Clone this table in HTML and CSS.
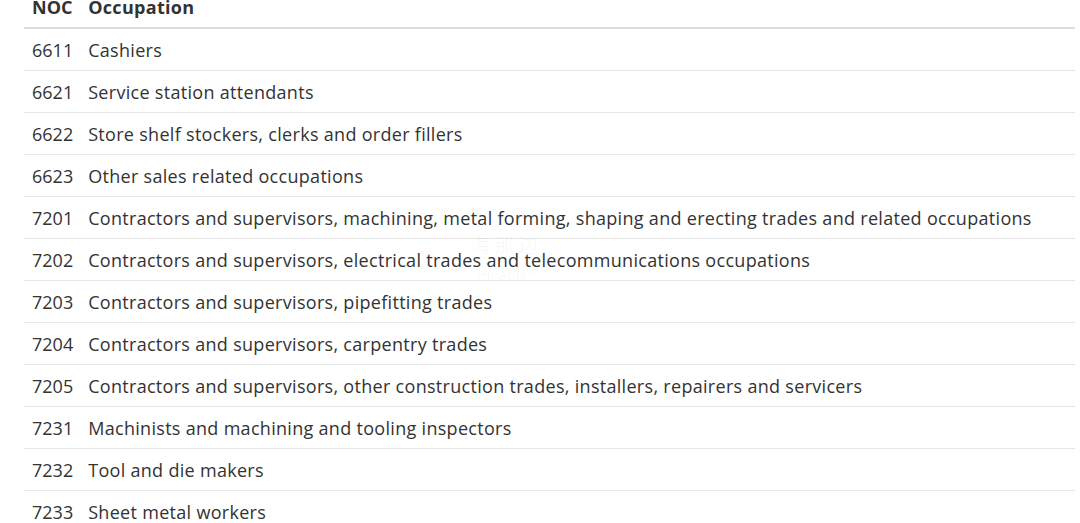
FILE: index.html
```html
<!DOCTYPE html>
<html>
<head>
<meta charset="utf-8">
<link rel="stylesheet" href="styles.css">
</head>
<body>
<div class="wrap">
<table class="noc">
<thead>
<tr><th class="code">NOC</th><th>Occupation</th></tr>
</thead>
<tbody>
<tr><td class="code">6611</td><td>Cashiers</td></tr>
<tr><td class="code">6621</td><td>Service station attendants</td></tr>
<tr><td class="code">6622</td><td>Store shelf stockers, clerks and order fillers</td></tr>
<tr><td class="code">6623</td><td>Other sales related occupations</td></tr>
<tr><td class="code">7201</td><td>Contractors and supervisors, machining, metal forming, shaping and erecting trades and related occupations</td></tr>
<tr><td class="code">7202</td><td>Contractors and supervisors, electrical trades and telecommunications occupations</td></tr>
<tr><td class="code">7203</td><td>Contractors and supervisors, pipefitting trades</td></tr>
<tr><td class="code">7204</td><td>Contractors and supervisors, carpentry trades</td></tr>
<tr><td class="code">7205</td><td>Contractors and supervisors, other construction trades, installers, repairers and servicers</td></tr>
<tr><td class="code">7231</td><td>Machinists and machining and tooling inspectors</td></tr>
<tr><td class="code">7232</td><td>Tool and die makers</td></tr>
<tr><td class="code">7233</td><td>Sheet metal workers</td></tr>
</tbody>
</table>
<div class="watermark"><span class="wm-cn">海那边</span><span class="wm-en">Hinabian</span></div>
</div>
</body>
</html>
```

FILE: styles.css
```css
html, body {
  margin: 0;
  padding: 0;
  background: #fff;
}
.wrap {
  position: relative;
  padding: 0 5px 0 24px;
  overflow: hidden;
  height: 523px;
}
.noc {
  width: 100%;
  border-collapse: collapse;
  margin-top: -14px;
  font-family: "Open Sans", "Noto Sans", sans-serif;
  font-size: 18px;
  color: #333;
}
.noc th, .noc td {
  text-align: left;
  padding: 9px 8px 7px 8px;
  line-height: 25px;
  white-space: nowrap;
}
.noc th:last-child, .noc td:last-child {
  letter-spacing: 0.3px;
  padding-left: 7px;
  width: 100%;
}
.noc th {
  font-weight: 700;
  border-bottom: 2px solid #ddd;
}
.noc td {
  border-bottom: 1px solid #e6e6e6;
}
.noc .code {
  width: 41px;
}
.watermark {
  position: absolute;
  left: 470px;
  top: 234px;
  display: flex;
  flex-direction: column;
  align-items: center;
  color: rgba(0,0,0,0.035);
  font-family: "Noto Sans", "Noto Sans CJK SC", sans-serif;
  pointer-events: none;
}
.wm-cn {
  font-size: 20px;
  line-height: 24px;
  letter-spacing: 4px;
}
.wm-en {
  font-size: 14px;
  line-height: 18px;
  margin-top: 8px;
}
```
